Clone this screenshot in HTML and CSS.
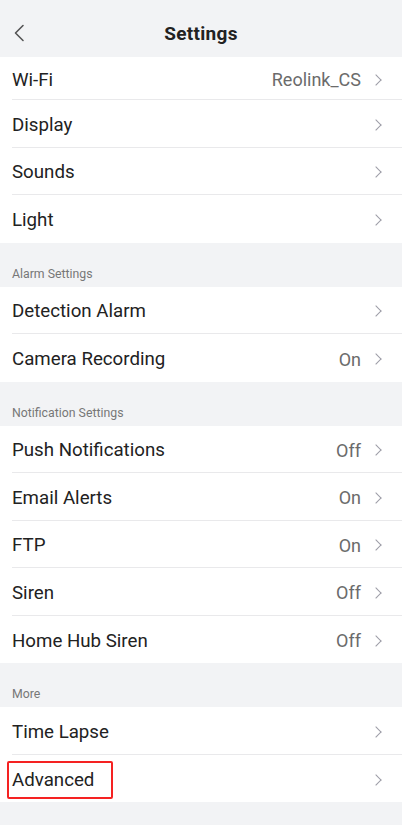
FILE: index.html
```html
<!DOCTYPE html>
<html lang="en">
<head>
    <meta charset="UTF-8">
    <meta name="viewport" content="width=device-width, initial-scale=1.0">
    <title>Settings</title>
    <link rel="stylesheet" href="styles.css">
</head>
<body>
    <!-- top bar -->
    <div class="header">
        <svg class="back" width="12" height="18" viewBox="0 0 12 18">
            <path d="M10 1.5 L2.5 9 L10 16.5" fill="none" stroke="#555" stroke-width="1.6" stroke-linecap="round" stroke-linejoin="round"/>
        </svg>
        <div class="title">Settings</div>
    </div>

    <div class="group">
        <div class="row first"><span class="name">Wi-Fi</span><span class="value">Reolink_CS</span><i class="arrow"></i></div>
        <div class="row"><span class="name">Display</span><span class="value"></span><i class="arrow"></i></div>
        <div class="row"><span class="name">Sounds</span><span class="value"></span><i class="arrow"></i></div>
        <div class="row last"><span class="name">Light</span><span class="value"></span><i class="arrow"></i></div>
    </div>

    <div class="label">Alarm Settings</div>
    <div class="group">
        <div class="row"><span class="name">Detection Alarm</span><span class="value"></span><i class="arrow"></i></div>
        <div class="row last"><span class="name">Camera Recording</span><span class="value">On</span><i class="arrow"></i></div>
    </div>

    <div class="label">Notification Settings</div>
    <div class="group">
        <div class="row"><span class="name">Push Notifications</span><span class="value">Off</span><i class="arrow"></i></div>
        <div class="row"><span class="name">Email Alerts</span><span class="value">On</span><i class="arrow"></i></div>
        <div class="row"><span class="name">FTP</span><span class="value">On</span><i class="arrow"></i></div>
        <div class="row"><span class="name">Siren</span><span class="value">Off</span><i class="arrow"></i></div>
        <div class="row last"><span class="name">Home Hub Siren</span><span class="value">Off</span><i class="arrow"></i></div>
    </div>

    <div class="label">More</div>
    <div class="group">
        <div class="row"><span class="name">Time Lapse</span><span class="value"></span><i class="arrow"></i></div>
        <div class="row last"><span class="name mark">Advanced</span><span class="value"></span><i class="arrow"></i></div>
    </div>
</body>
</html>
```

FILE: styles.css
```css
*{
    margin: 0;
    padding: 0;
    box-sizing: border-box;
}
body{
    background-color: #f2f3f5;
    font-family: Roboto, "Noto Sans", sans-serif;
    color: #222;
    width: 402px;
    height: 825px;
    overflow: hidden;
}
.header{
    height: 57px;
    display: flex;
    align-items: center;
    justify-content: center;
    position: relative;
    padding-top: 9px;
}
.back{
    position: absolute;
    left: 13px;
    top: 24px;
}
.title{
    font-size: 19px;
    font-weight: 700;
    letter-spacing: 0.3px;
    color: #222;
}
.group{
    background-color: #fff;
}
.row{
    height: 47.5px;
    display: flex;
    align-items: center;
    margin-left: 12px;
    padding-right: 20px;
    padding-top: 3px;
    border-bottom: 1px solid #e9e9eb;
}
.row.first{
    height: 43px;
}
.row.last{
    border-bottom: none;
}
.name{
    font-size: 18.7px;
    flex: 1;
    white-space: nowrap;
}
.name.mark{
    flex: none;
    margin-left: -5px;
    padding: 6px 17px 6px 3px;
    border: 2px solid #f52222;
    border-radius: 2px;
    margin-right: auto;
}
.value{
    font-size: 18px;
    color: #6b6b6b;
    margin-right: 11px;
}
.arrow{
    width: 8px;
    height: 8px;
    border-top: 1.6px solid #9c9ca6;
    border-right: 1.6px solid #9c9ca6;
    transform: rotate(45deg);
    margin-right: 2px;
}
.label{
    height: 44px;
    display: flex;
    align-items: flex-end;
    padding: 0 12px 6px;
    font-size: 12.3px;
    color: #777;
}
```
